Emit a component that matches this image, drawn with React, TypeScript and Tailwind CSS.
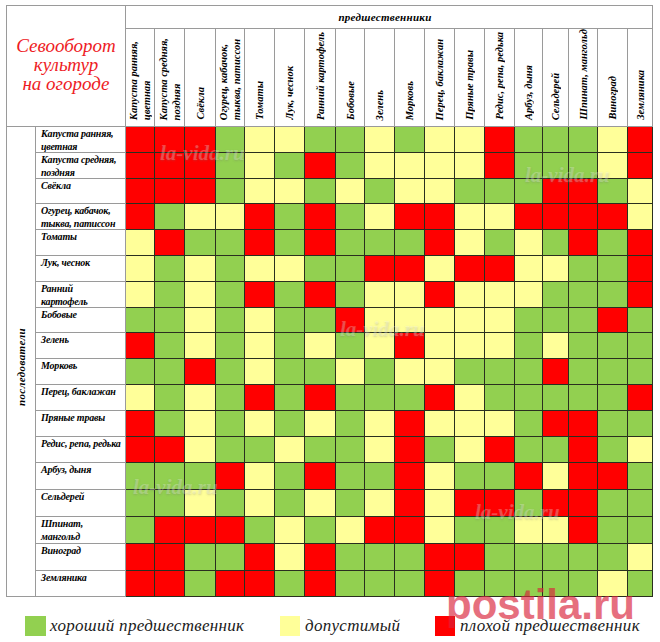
import React from "react";

const crops = [
  "Капуста ранняя,\nцветная",
  "Капуста средняя,\nпоздняя",
  "Свёкла",
  "Огурец, кабачок,\nтыква, патиссон",
  "Томаты",
  "Лук, чеснок",
  "Ранний картофель",
  "Бобовые",
  "Зелень",
  "Морковь",
  "Перец, баклажан",
  "Пряные травы",
  "Редис, репа, редька",
  "Арбуз, дыня",
  "Сельдерей",
  "Шпинат, мангольд",
  "Виноград",
  "Земляника",
];

const rowLabels = [
  "Капуста ранняя,\nцветная",
  "Капуста средняя,\nпоздняя",
  "Свёкла",
  "Огурец, кабачок,\nтыква, патиссон",
  "Томаты",
  "Лук, чеснок",
  "Ранний\nкартофель",
  "Бобовые",
  "Зелень",
  "Морковь",
  "Перец, баклажан",
  "Пряные травы",
  "Редис, репа, редька",
  "Арбуз, дыня",
  "Сельдерей",
  "Шпинат,\nмангольд",
  "Виноград",
  "Земляника",
];

// R - плохой, G - хороший, Y - допустимый
const matrix = [
  "RRRGYYGGYGYYRGGGYR",
  "RRRGYGRGYYYYRGGGYR",
  "RRRGYYGYGYYGGGRRGY",
  "RGYYRGRGYRRYYRRRRY",
  "YRGGRGRGGGRYGYGRGR",
  "YGYGYYGGRRYRRYYGGR",
  "YGYGRGRGYYRYYYGGGR",
  "GGYGYGGRYYYYYGGGRG",
  "RGYGYGYGYRYYYGYGGG",
  "GGRGYGGYGYYGGGRGGG",
  "YGYGRGRGGGRYGGGGGR",
  "RGYGYGYGYRYYYGRRGG",
  "RRYGGYGGYRGYRGGRGY",
  "GGGRYGRGGRYGGRYRRG",
  "GGYGYGYGYRYRRGRRGG",
  "GRRRGYGYRRYGGYYRGG",
  "RRGGRYRGGGRRGGGGGY",
  "RRGRRGRGGGRGGGGGYG",
];

const fill: Record<string, string> = {
  R: "bg-[#ff0000]",
  G: "bg-[#92d050]",
  Y: "bg-[#ffff99]",
};

const watermarks = [
  { left: 160, top: 143 },
  { left: 525, top: 165 },
  { left: 340, top: 319 },
  { left: 133, top: 477 },
  { left: 475, top: 502 },
];

export default function App() {
  return (
    <div className="relative w-[660px] h-[642px] overflow-hidden bg-white font-['Liberation_Serif',serif] text-black">
      <div className="ml-[6px] pt-[5px]">
        <div className="grid grid-cols-[29px_90px_29px_30px_31px_29px_30px_30px_31px_29px_30px_30px_30px_30px_30px_28px_26px_29px_30px_25px] grid-rows-[23px_98px_repeat(12,25.8px)_repeat(6,26.8px)] border-l border-t border-[#9a9a9a] w-max">
          <div className="col-span-2 row-span-2 flex flex-col items-center justify-center border-r border-b border-[#9a9a9a] pb-[4px] text-[19px] leading-[19px] italic text-[#ee1c25]">
            <span>Севооборот</span>
            <span>культур</span>
            <span>на огороде</span>
          </div>
          <div className="col-span-18 flex items-start justify-center border-r border-b border-[#9a9a9a] pt-[3px] pr-[8px] text-[11px] font-bold italic tracking-[0.3px]">
            предшественники
          </div>
          {crops.map((c) => (
            <div
              key={c}
              className="flex items-end justify-center border-r border-b border-[#9a9a9a] pb-[6px]"
            >
              <span className="[writing-mode:vertical-rl] rotate-180 whitespace-pre text-[10.5px] leading-[13px] font-bold italic">
                {c}
              </span>
            </div>
          ))}
          <div className="row-span-18 flex items-center justify-center border-r border-b border-[#9a9a9a] pt-[10px]">
            <span className="[writing-mode:vertical-rl] rotate-180 text-[11px] font-bold italic tracking-[0.4px]">
              последователи
            </span>
          </div>
          {rowLabels.map((label, r) => (
            <React.Fragment key={label}>
              <div className="border-r border-b border-[#9a9a9a] pl-[5px] whitespace-pre text-[10px] leading-[13px] font-bold italic tracking-[-0.2px] overflow-hidden">
                {label}
              </div>
              {matrix[r].split("").map((v, c) => (
                <div
                  key={c}
                  className={`border-r border-b border-[#2a2f1f] ${fill[v]}`}
                />
              ))}
            </React.Fragment>
          ))}
        </div>
      </div>

      <div className="flex items-center pl-[25px] mt-[16px] italic text-[17px] text-[#1a1a1a] tracking-[0.3px]">
        <span className="w-[21px] h-[20px] bg-[#92d050]" />
        <span className="ml-[4px] w-[230px]">хороший предшественник</span>
        <span className="w-[20px] h-[20px] bg-[#ffff99]" />
        <span className="ml-[5px] w-[130px]">допустимый</span>
        <span className="w-[20px] h-[20px] bg-[#ff0000]" />
        <span className="ml-[5px]">плохой предшественник</span>
      </div>

      {watermarks.map((w, i) => (
        <div
          key={i}
          className="absolute text-[21px] italic font-bold leading-none text-white/25 [text-shadow:0_1px_2px_rgba(110,110,110,0.25)] pointer-events-none"
          style={{ left: w.left, top: w.top }}
        >
          la-vida.ru
        </div>
      ))}

      <div className="absolute left-[446px] top-[584px] font-['Liberation_Sans',sans-serif] text-[42px] leading-[42px] font-bold text-[#d9233a] opacity-65 pointer-events-none">
        postila.ru
      </div>
    </div>
  );
}
